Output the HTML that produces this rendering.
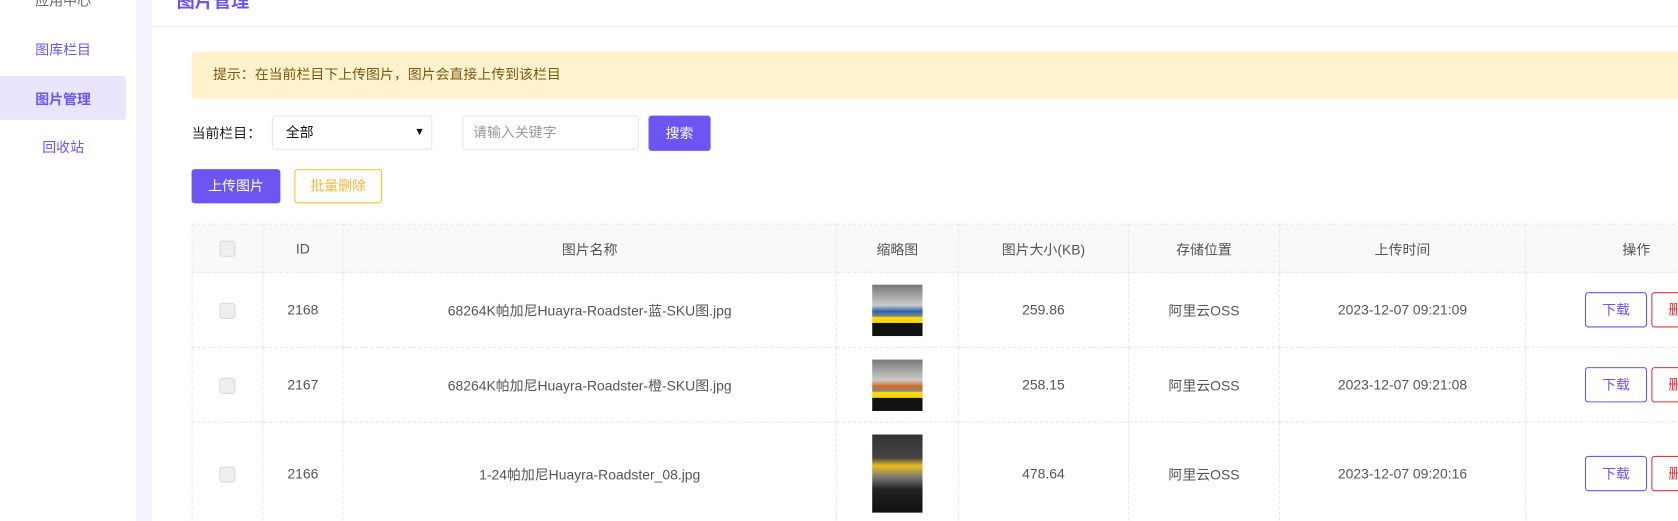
<!DOCTYPE html>
<html><head><meta charset="utf-8"><style>
*{box-sizing:border-box;margin:0;padding:0}
html,body{width:1678px;height:521px;overflow:hidden;background:#fff}
body{font-family:"Liberation Sans","Noto Sans CJK SC",sans-serif;font-size:13px;color:#555;position:relative}
#wrap{position:absolute;left:0;top:0;width:1568px;height:487px;transform:scale(1.0702);transform-origin:0 0;overflow:hidden}
.abs{position:absolute}
.side{left:0;top:0;width:127px;height:487px;background:#fff}
.gap{left:127px;top:0;width:15px;height:487px;background:#f4f5fa}
.si{position:absolute;left:0;width:118px;text-align:center;color:#6c55f0;font-size:13px}
.btn{position:absolute;border-radius:3px;text-align:center;font-size:13px}
table{position:absolute;left:179px;top:209px;border-collapse:collapse;table-layout:fixed;width:1460px}
td,th{border:1px dashed #e8e8e8;text-align:center;font-weight:normal;color:#555;font-size:13px;white-space:nowrap}
th{background:#f9f9f9;height:45px}
.cb{display:inline-block;width:15px;height:15px;border:1px solid #d8d8d8;background:#eee;border-radius:3px;vertical-align:middle}
.op{display:inline-block;width:58px;height:33px;line-height:31px;border:1px solid #6c55f0;color:#6c55f0;border-radius:3px;margin-right:4px;text-align:center}
.op.r{border-color:#e0333a;color:#e0333a}
.thumb{display:inline-block;width:47px;vertical-align:middle}
</style></head><body><div id="wrap">
<div class="abs side"></div>
<div class="abs gap"></div>
<div class="si" style="top:-10px;color:#666">应用中心</div>
<div class="si" style="top:36px">图库栏目</div>
<div class="abs" style="left:0;top:71px;width:118px;height:41px;background:#e9e5fd;border-radius:0 4px 4px 0"></div>
<div class="si" style="top:82px;font-weight:bold">图片管理</div>
<div class="si" style="top:127px">回收站</div>
<div class="abs" style="left:165px;top:-13px;font-size:17px;font-weight:bold;color:#6c55f0">图片管理</div>
<div class="abs" style="left:142px;top:24px;width:1500px;height:1px;background:#eee"></div>
<div class="abs" style="left:179px;top:48px;width:1499px;height:44px;background:#fff2cc;border-radius:4px 0 0 4px;color:#7a5a10;line-height:44px;padding-left:20px">提示：在当前栏目下上传图片，图片会直接上传到该栏目</div>
<div class="abs" style="left:179px;top:114px;color:#222">当前栏目：</div>
<div class="abs" style="left:254px;top:108px;width:150px;height:32px;border:1px solid #e5e5e5;border-radius:3px;padding-left:12px;line-height:30px;color:#111">全部<span style="position:absolute;right:6px;top:0;font-size:10px">&#9660;</span></div>
<div class="abs" style="left:432px;top:108px;width:165px;height:32px;border:1px solid #e5e5e5;border-radius:3px;padding-left:9px;line-height:30px;color:#999">请输入关键字</div>
<div class="btn" style="left:606px;top:108px;width:58px;height:33px;line-height:33px;background:#6c55f0;color:#fff">搜索</div>
<div class="btn" style="left:179px;top:158px;width:83px;height:32px;line-height:32px;background:#6c55f0;color:#fff">上传图片</div>
<div class="btn" style="left:275px;top:158px;width:82px;height:32px;line-height:30px;border:1px solid #f7c12b;color:#f0b840">批量删除</div>
<table>
<colgroup><col style="width:66px"><col style="width:75px"><col style="width:461px"><col style="width:114px"><col style="width:159px"><col style="width:141px"><col style="width:230px"><col style="width:214px"></colgroup>
<tr><th><span class="cb"></span></th><th>ID</th><th>图片名称</th><th>缩略图</th><th>图片大小(KB)</th><th>存储位置</th><th>上传时间</th><th style="text-align:left;padding-left:90px">操作</th></tr>
<tr style="height:70px"><td><span class="cb"></span></td><td>2168</td><td>68264K帕加尼Huayra-Roadster-蓝-SKU图.jpg</td><td><span class="thumb" style="height:48px;background:linear-gradient(#777,#ccc 40%,#2a5fa8 52%,#888 62%,#f5d90a 63%,#f5d90a 74%,#111 75%)"></span></td><td>259.86</td><td>阿里云OSS</td><td>2023-12-07 09:21:09</td><td style="text-align:left;padding-left:55px"><span class="op">下载</span><span class="op r">删除</span></td></tr>
<tr style="height:70px"><td><span class="cb"></span></td><td>2167</td><td>68264K帕加尼Huayra-Roadster-橙-SKU图.jpg</td><td><span class="thumb" style="height:48px;background:linear-gradient(#777,#ccc 40%,#d06a20 52%,#888 62%,#f5d90a 63%,#f5d90a 74%,#111 75%)"></span></td><td>258.15</td><td>阿里云OSS</td><td>2023-12-07 09:21:08</td><td style="text-align:left;padding-left:55px"><span class="op">下载</span><span class="op r">删除</span></td></tr>
<tr style="height:96px"><td><span class="cb"></span></td><td>2166</td><td>1-24帕加尼Huayra-Roadster_08.jpg</td><td><span class="thumb" style="height:73px;background:linear-gradient(#333,#444 30%,#e8c020 40%,#777 55%,#222 70%,#111)"></span></td><td>478.64</td><td>阿里云OSS</td><td>2023-12-07 09:20:16</td><td style="text-align:left;padding-left:55px"><span class="op">下载</span><span class="op r">删除</span></td></tr>
</table>
</div></body></html>
